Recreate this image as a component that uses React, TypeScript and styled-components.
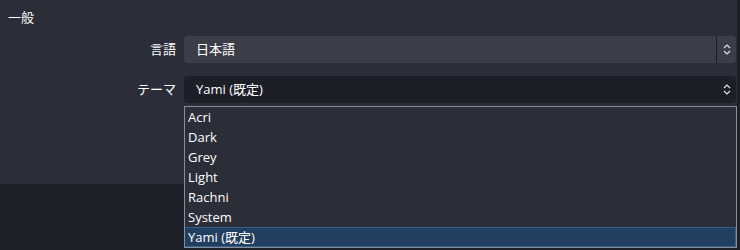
import React, { FC } from 'react';
import styled, { createGlobalStyle } from 'styled-components';

const colors = {
  page: '#1e2029',
  panel: '#2b2e38',
  combo: '#3b3e48',
  comboDark: '#1d1f28',
  text: '#fefefe',
  border: '#8a8d96',
  selected: '#233f60',
  selectedBorder: '#30608f',
};

const GlobalStyle = createGlobalStyle`
  body {
    margin: 0;
    background: ${colors.page};
    font-family: 'Open Sans', 'Noto Sans CJK JP', sans-serif;
    font-size: 13px;
    color: ${colors.text};
  }
`;

const themes = ['Acri', 'Dark', 'Grey', 'Light', 'Rachni', 'System', 'Yami (既定)'];
const current = 'Yami (既定)';

const Arrows: FC = () => (
  <svg width="8" height="11" viewBox="0 0 8 11" fill="none" stroke="#e6e7ea" strokeWidth="1.1">
    <path d="M1 4 L4 1 L7 4" />
    <path d="M1 7 L4 10 L7 7" />
  </svg>
);

const App: FC = () => (
  <Root>
    <GlobalStyle />
    <Panel>
      <Heading>一般</Heading>
      <Form>
        <Label>言語</Label>
        <Combo $variant="light">
          <ComboText>日本語</ComboText>
          <ArrowBox $separated>
            <Arrows />
          </ArrowBox>
        </Combo>
        <Label>テーマ</Label>
        <ThemeCell>
          <Combo $variant="dark">
            <ComboText>{current}</ComboText>
            <ArrowBox>
              <Arrows />
            </ArrowBox>
          </Combo>
          <Popup>
            {themes.map((name) => (
              <Item key={name} $selected={name === current}>
                {name}
              </Item>
            ))}
          </Popup>
        </ThemeCell>
      </Form>
    </Panel>
  </Root>
);

export default App;

const Root = styled.div`
  width: 740px;
  height: 250px;
  overflow: hidden;
`;

const Panel = styled.div`
  width: 737px;
  height: 184px;
  background: ${colors.panel};
  border-bottom-right-radius: 4px;
  box-sizing: border-box;
  padding-top: 7px;
`;

const Heading = styled.div`
  padding-left: 8px;
  height: 20px;
  line-height: 20px;
  font-size: 13px;
`;

const Form = styled.div`
  display: grid;
  grid-template-columns: 176px 552px;
  column-gap: 8px;
  row-gap: 13px;
  margin-top: 9px;
  align-items: center;
`;

const Label = styled.div`
  text-align: right;
  line-height: 27px;
`;

const ThemeCell = styled.div`
  position: relative;
`;

const Combo = styled.div<{ $variant: 'light' | 'dark' }>`
  display: flex;
  align-items: center;
  height: 27px;
  border-radius: 4px;
  background: ${({ $variant }) => ($variant === 'light' ? colors.combo : colors.comboDark)};
`;

const ComboText = styled.span`
  flex: 1;
  padding-left: 12px;
  line-height: 27px;
`;

const ArrowBox = styled.div<{ $separated?: boolean }>`
  width: 19px;
  height: 27px;
  display: flex;
  align-items: center;
  justify-content: center;
  border-left: 1px solid ${({ $separated }) => ($separated ? colors.comboDark : 'transparent')};
`;

const Popup = styled.div`
  position: absolute;
  top: 30px;
  left: 0;
  width: 553px;
  box-sizing: border-box;
  border: 1px solid ${colors.border};
  background: ${colors.panel};
  z-index: 2;
`;

const Item = styled.div<{ $selected?: boolean }>`
  height: 20px;
  line-height: 19px;
  padding-left: 3px;
  box-sizing: border-box;
  background: ${({ $selected }) => ($selected ? colors.selected : 'transparent')};
  border: 1px solid ${({ $selected }) => ($selected ? colors.selectedBorder : 'transparent')};
  border-left-width: 0;
  border-right-width: ${({ $selected }) => ($selected ? '1px' : '0')};
`;
